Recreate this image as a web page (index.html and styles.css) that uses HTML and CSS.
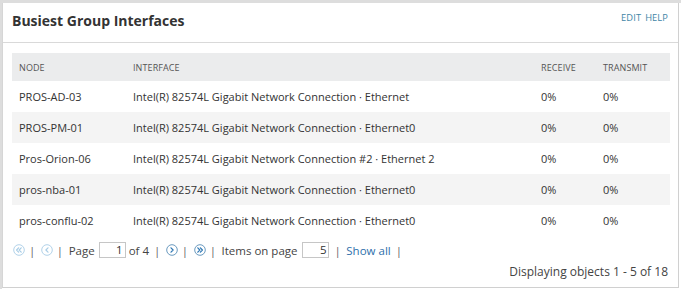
FILE: index.html
```html
<!DOCTYPE html>
<html>
<head>
<meta charset="utf-8">
<link rel="stylesheet" href="styles.css">
</head>
<body>
<div class="frame">
  <div class="panel">
    <div class="head">
      <h1 class="title">Busiest Group Interfaces</h1>
      <div class="actions"><a class="act">EDIT</a><a class="act">HELP</a></div>
    </div>
    <div class="body">
      <table class="grid">
        <thead>
          <tr><th class="c-node">NODE</th><th class="c-if">INTERFACE</th><th class="c-rx">RECEIVE</th><th class="c-tx">TRANSMIT</th></tr>
        </thead>
        <tbody>
          <tr><td>PROS-AD-03</td><td>Intel(R) 82574L Gigabit Network Connection · Ethernet</td><td>0%</td><td>0%</td></tr>
          <tr class="alt"><td>PROS-PM-01</td><td>Intel(R) 82574L Gigabit Network Connection · Ethernet0</td><td>0%</td><td>0%</td></tr>
          <tr><td>Pros-Orion-06</td><td>Intel(R) 82574L Gigabit Network Connection #2 · Ethernet 2</td><td>0%</td><td>0%</td></tr>
          <tr class="alt"><td>pros-nba-01</td><td>Intel(R) 82574L Gigabit Network Connection · Ethernet0</td><td>0%</td><td>0%</td></tr>
          <tr><td>pros-conflu-02</td><td>Intel(R) 82574L Gigabit Network Connection · Ethernet0</td><td>0%</td><td>0%</td></tr>
        </tbody>
      </table>
      <div class="pager">
        <svg class="pi off" viewBox="0 0 12 12" width="12" height="12"><circle cx="6" cy="6" r="5.3"/><path d="M5.6 3.8 3.6 6 5.6 8.2M8.2 3.8 6.2 6 8.2 8.2"/></svg>
        <span class="sep">|</span>
        <svg class="pi off" viewBox="0 0 12 12" width="12" height="12"><circle cx="6" cy="6" r="5.3"/><path d="M7 3.8 4.9 6 7 8.2"/></svg>
        <span class="sep">|</span>
        <span class="lbl">Page</span><span class="box">1</span><span>of 4</span>
        <span class="sep">|</span>
        <svg class="pi on" viewBox="0 0 12 12" width="12" height="12"><circle cx="6" cy="6" r="5.3"/><path d="M5 3.8 7.1 6 5 8.2"/></svg>
        <span class="sep">|</span>
        <svg class="pi on" viewBox="0 0 12 12" width="12" height="12"><circle cx="6" cy="6" r="5.3"/><path d="M3.8 3.8 5.8 6 3.8 8.2M6.4 3.8 8.4 6 6.4 8.2"/></svg>
        <span class="sep">|</span>
        <span>Items on page</span><span class="box box-last">5</span>
        <span class="sep">|</span>
        <a class="link">Show all</a>
        <span class="sep">|</span>
      </div>
      <div class="count">Displaying objects 1 - 5 of 18</div>
    </div>
  </div>
</div>
</body>
</html>
```
FILE: styles.css
```css
html, body { margin: 0; padding: 0; background: #fff; }
body { font-family: "Open Sans", "Liberation Sans", sans-serif; color: #333; }
.frame {
  width: 681px; height: 289px; box-sizing: border-box;
  border-top: 3px solid #dddddd; border-left: 2px solid #dddddd;
  padding: 0 2px 1px 0;
}
.panel {
  height: 100%; box-sizing: border-box;
  border: 1px solid #d0d0d0; border-top: none; border-left: 1px solid #d6d6d6;
  background: #fff;
}
.head {
  height: 40px; border-bottom: 1px solid #d9d9d9; box-sizing: border-box;
  display: flex; align-items: center; justify-content: space-between;
  padding: 0 10px 0 9px;
}
.title { margin: 0; font-size: 14px; font-weight: 700; color: #333; padding-bottom: 4px; }
.actions { display: flex; gap: 4px; margin-top: -10px; }
.act { font-size: 9.3px; color: #3f85a6; letter-spacing: 0.1px; }
.body { padding: 10px 10px 0 9px; }
.grid { width: 658px; border-collapse: collapse; font-size: 11px; }
.grid th {
  background: #ebeced; height: 28px; padding: 0 0 0 7px; text-align: left;
  font-weight: 400; font-size: 9px; color: #555; letter-spacing: 0.1px;
}
.grid td { height: 31px; padding: 0 0 0 7px; color: #333; white-space: nowrap; }
.grid .alt td { background: #f4f4f4; }
.c-node { width: 107px; }
.c-if { width: 401px; }
.c-rx { width: 55px; }
.pager {
  display: flex; align-items: center; height: 28px; padding-left: 1px;
  font-size: 11.5px; color: #444;
}
.pager > * { margin-right: 5px; }
.pager > .pi { margin-right: 4px; }
.pager > .sep { margin-right: 5.5px; color: #666; }
.pager > .lbl { margin-right: 4px; }
.pi { fill: #fff; }
.pi circle { stroke-width: 0.9; }
.pi path { fill: none; stroke-width: 1.2; stroke-linecap: round; stroke-linejoin: round; }
.pi.off circle, .pi.off path { stroke: #a9cde6; }
.pi.on circle { stroke: #5a8fb8; }
.pi.on path { stroke: #2d77b4; }
.box {
  display: inline-block; width: 27px; height: 16px; box-sizing: border-box;
  border: 1px solid #c6c6c6; text-align: right; padding-right: 2px; line-height: 14px; color: #333;
}
.pager > .box { margin-right: 3px; }
.pager > .box-last { margin-right: 5px; }
.link { color: #2e6fab; }
.count { text-align: right; font-size: 12px; color: #444; margin-top: -1px; }
```
